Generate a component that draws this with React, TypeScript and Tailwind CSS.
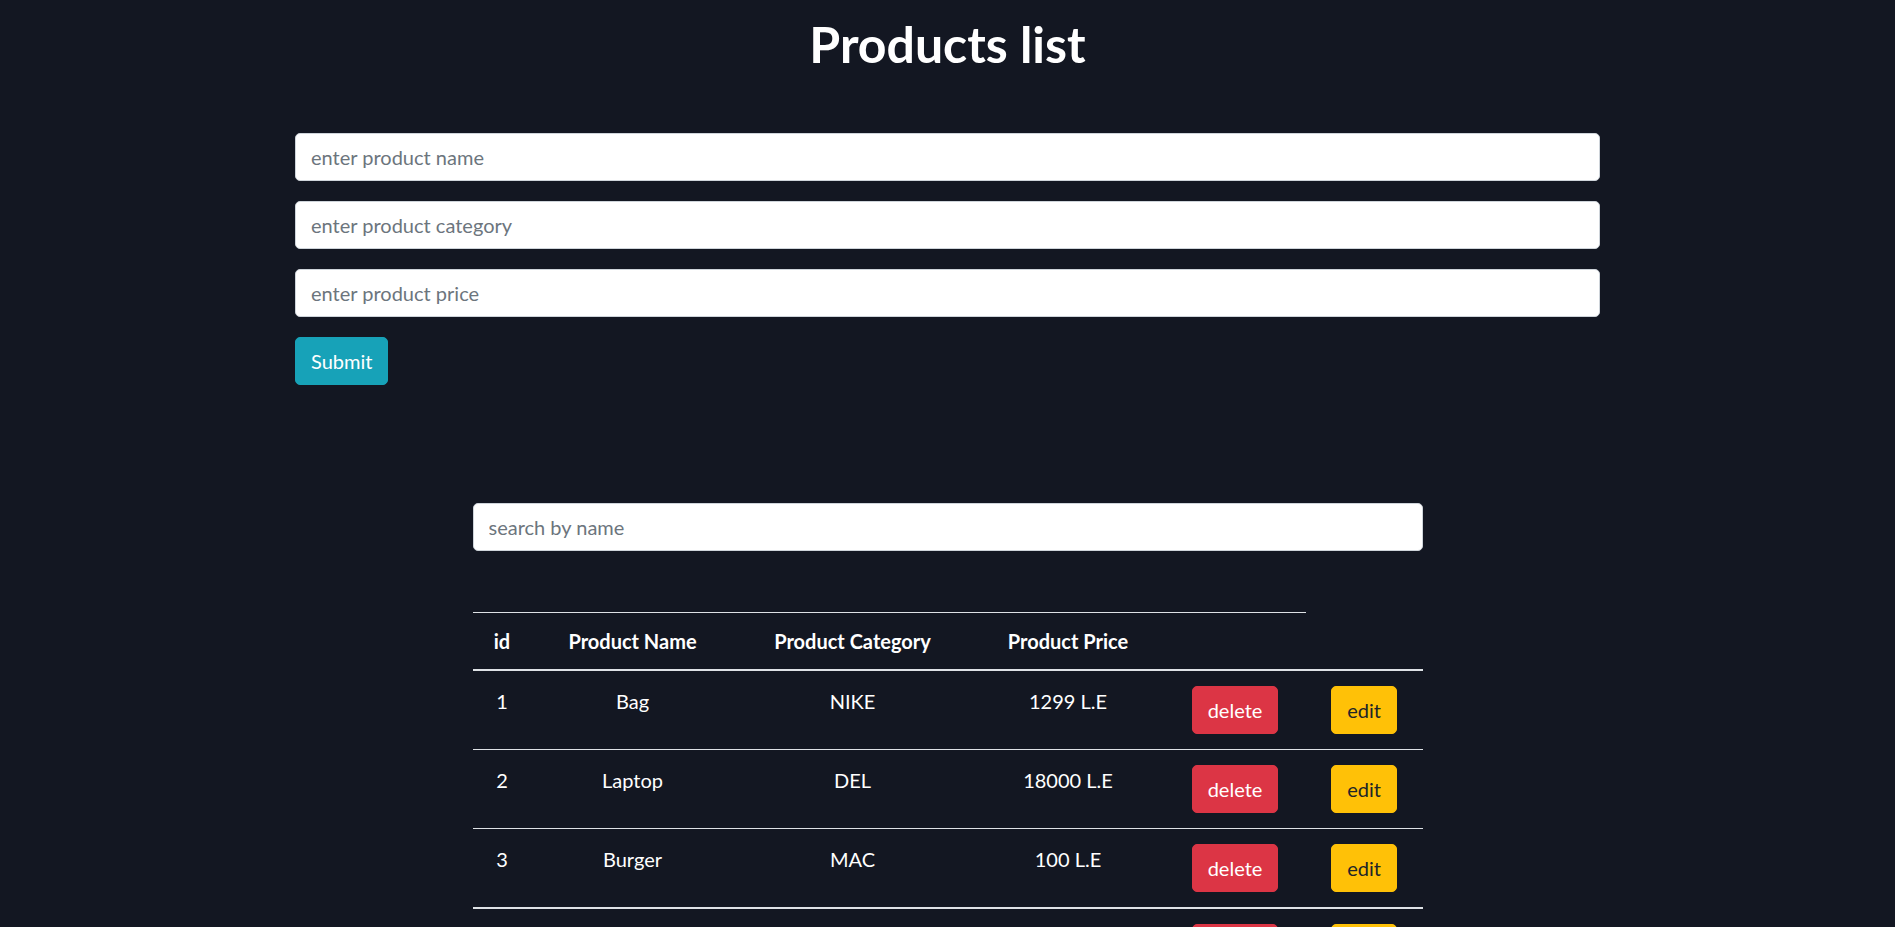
import React from "react";

type Product = { id: number; name: string; category: string; price: string };

const products: Product[] = [
  { id: 1, name: "Bag", category: "NIKE", price: "1299 L.E" },
  { id: 2, name: "Laptop", category: "DEL", price: "18000 L.E" },
  { id: 3, name: "Burger", category: "MAC", price: "100 L.E" },
  { id: 4, name: "Phone", category: "SAMSUNG", price: "9000 L.E" },
];

const inputCls =
  "block w-full h-[48px] rounded-[5px] border border-[#ced4da] bg-white px-[15px] text-[20px] leading-[30px] text-[#212529] placeholder:text-[#6c757d] outline-none";

export default function App() {
  return (
    <div
      className="min-h-screen bg-[#131722] pt-[14px] pb-[40px] text-white"
      style={{ fontFamily: "Lato, 'Open Sans', 'Liberation Sans', sans-serif" }}
    >
      <h1 className="text-center text-[50px] leading-[60px] font-bold text-white">Products list</h1>

      <form
        className="mx-auto mt-[59px] flex w-[1305px] flex-col gap-[20px]"
        onSubmit={(e) => e.preventDefault()}
      >
        <input className={inputCls} placeholder="enter product name" />
        <input className={inputCls} placeholder="enter product category" />
        <input className={inputCls} placeholder="enter product price" />
        <button
          type="submit"
          className="h-[48px] w-fit rounded-[5px] border border-[#17a2b8] bg-[#17a2b8] px-[15px] text-[20px] leading-[30px] text-white"
        >
          Submit
        </button>
      </form>

      <div className="mx-auto mt-[118px] w-[950px]">
        <input className={inputCls} placeholder="search by name" />

        <div className="mt-[61px]">
          <div className="grid grid-cols-[59px_202px_238px_193px_141px_117px] border-b-2 border-[#dee2e6] text-[20px] font-bold leading-[30px]">
            <div className="h-[57px] border-t border-[#dee2e6] pt-[13px] text-center">id</div>
            <div className="h-[57px] border-t border-[#dee2e6] pt-[13px] text-center">Product Name</div>
            <div className="h-[57px] border-t border-[#dee2e6] pt-[13px] text-center">Product Category</div>
            <div className="h-[57px] border-t border-[#dee2e6] pt-[13px] text-center">Product Price</div>
            <div className="h-[57px] border-t border-[#dee2e6]" />
            <div className="h-[57px]" />
          </div>

          {products.map((p, i) => (
            <div
              key={p.id}
              className={
                i === 2
                  ? "grid h-[80px] grid-cols-[59px_202px_238px_193px_141px_117px] border-b-2 border-[#dee2e6] text-[20px] leading-[30px]"
                  : "grid h-[79px] grid-cols-[59px_202px_238px_193px_141px_117px] border-b border-[#dee2e6] text-[20px] leading-[30px]"
              }
            >
              <div className="pt-[15px] text-center">{p.id}</div>
              <div className="pt-[15px] text-center">{p.name}</div>
              <div className="pt-[15px] text-center">{p.category}</div>
              <div className="pt-[15px] text-center">{p.price}</div>
              <div className="flex justify-center pt-[15px]">
                <button className="h-[48px] rounded-[5px] border border-[#dc3545] bg-[#dc3545] px-[15px] text-[20px] leading-[30px] text-white">
                  delete
                </button>
              </div>
              <div className="flex justify-center pt-[15px]">
                <button className="h-[48px] rounded-[5px] border border-[#ffc107] bg-[#ffc107] px-[15px] text-[20px] leading-[30px] text-[#212529]">
                  edit
                </button>
              </div>
            </div>
          ))}
        </div>
      </div>
    </div>
  );
}
